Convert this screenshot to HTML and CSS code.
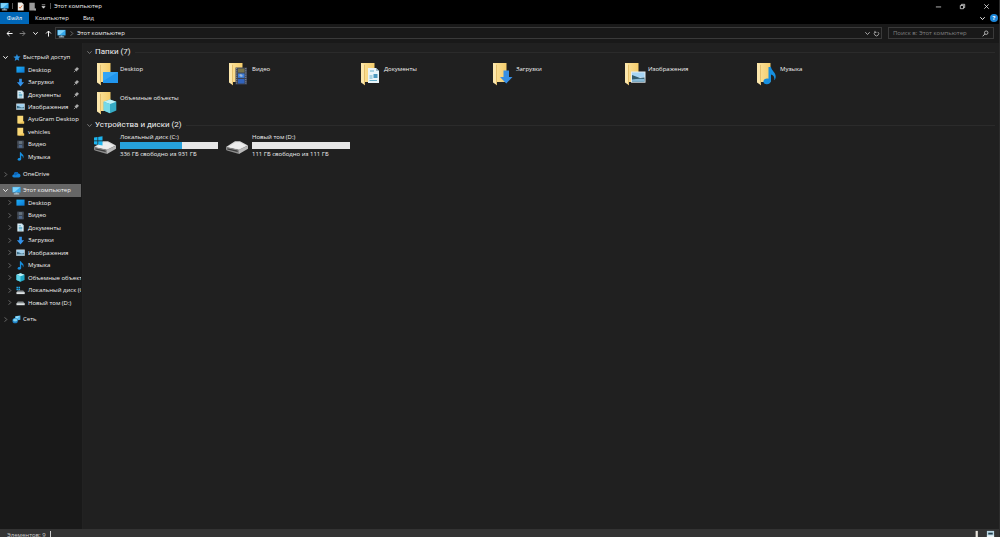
FILE: index.html
```html
<!DOCTYPE html>
<html lang="ru">
<head>
<meta charset="utf-8">
<title>Этот компьютер</title>
<link rel="stylesheet" href="styles.css">
</head>
<body>
<svg class="defs" aria-hidden="true">
  <defs>
    <linearGradient id="g-blue" x1="0" y1="0" x2="1" y2="1"><stop offset="0" stop-color="#1fb0f7"/><stop offset="1" stop-color="#0a78d4"/></linearGradient>
    <linearGradient id="g-fold" x1="0" y1="0" x2="1" y2="0"><stop offset="0" stop-color="#fbe3a0"/><stop offset="1" stop-color="#f5cd6b"/></linearGradient>
  </defs>
  <symbol id="i-chev" viewBox="0 0 8 8"><path d="M1.500 2.500L4 5.200L6.500 2.500" fill="none" stroke="currentColor" stroke-width="1.100"/></symbol>
  <symbol id="i-right" viewBox="0 0 8 8"><path d="M3 1.500L5.500 4L3 6.500" fill="none" stroke="currentColor" stroke-width="1"/></symbol>
  <symbol id="i-pc" viewBox="0 0 10 10"><path d="M.5 1h9v6.200h-9z" fill="#35a9ee"/><path d="M1 1.500h8L3 6.700H1z" fill="#80d3fa"/><path d="M4 7.200h2v1.200H4z" fill="#9fc6dc"/><path d="M2 8.300h6v1H2z" fill="#c3e3f5"/></symbol>
  <symbol id="i-star" viewBox="0 0 10 10"><path d="M5.500 1l1.100 2.700 2.900.300-2.200 1.900.700 2.800-2.500-1.500L3 8.800l.700-2.900-2.200-1.800 2.900-.400z" fill="#2b8fdc"/></symbol>
  <symbol id="i-desk" viewBox="0 0 10 10"><rect x=".5" y="1.800" width="9" height="6.700" fill="url(#g-blue)"/></symbol>
  <symbol id="i-down" viewBox="0 0 10 10"><path d="M3.500.700h3v4h2.500L5 9.500 1 4.700h2.500z" fill="#3292ea"/></symbol>
  <symbol id="i-doc" viewBox="0 0 10 10"><path d="M1.500.500h5l2 2v7h-7z" fill="#dff0f8"/><path d="M6.500.500l2 2h-2z" fill="#8fb6c9"/><path d="M3 3h2.500M3 7.800h4" stroke="#3f9bbd" stroke-width=".8"/><path d="M3 4.200h4v2.500H3z" fill="#70b5cf"/></symbol>
  <symbol id="i-pic" viewBox="0 0 10 10"><path d="M.3 1.700h9.400v7H.3z" fill="#dbe7ee"/><path d="M1 2.400h8v3H1z" fill="#9ed0ef"/><path d="M1 4.200l2.500.8 3 1 2.500-.700V8H1z" fill="#356882"/><path d="M1 7q4-1.500 8-.5V8H1z" fill="#8bb8d0"/></symbol>
  <symbol id="i-fold" viewBox="0 0 10 10"><path d="M1.500.8h6.500v6.500H9v2.200H1.500z" fill="#f8d776"/><path d="M8 7.300H9v2.200H2z" fill="#f0c356"/></symbol>
  <symbol id="i-film" viewBox="0 0 10 10"><rect x="1.500" y=".5" width="7" height="9" fill="#333b47"/><path d="M2.200 1v8M7.800 1v8" stroke="#8f98a3" stroke-width=".7" stroke-dasharray=".8 .6"/><path d="M3.200 1.200h3.600v3.200H3.200z" fill="#66727c"/><path d="M3.200 5.300h3.600v3.400H3.200z" fill="#50698c"/></symbol>
  <symbol id="i-note" viewBox="0 0 10 10"><path d="M4.300.3h1.200c.3 1.800 3.200 2.400 2.900 5.200-.1.800-.5 1.400-.8 1.700.4-1.800-.3-2.700-1.800-3.200v3.500c0 1.500-1 2.200-2.200 2.200-1.200 0-1.900-.5-1.900-1.300 0-1.200 1.400-2 2.600-1.600z" fill="#168fe0"/></symbol>
  <symbol id="i-cube" viewBox="0 0 10 10"><path d="M5 .3l4.500 1.700v5.700L5 9.700.5 7.700V2z" fill="#20a7c6"/><path d="M5 .3l4.500 1.700L5 3.700.5 2z" fill="#b9f1f7"/><path d="M.5 2L5 3.700v6L.5 7.700z" fill="#5fd4e8"/></symbol>
  <symbol id="i-cloud" viewBox="0 0 10 10"><path d="M2.200 8.200C-.2 8.200-.2 5 2 4.900 2.400 2 5.900 1.400 7 4c2.700-.1 3.600 4.200.7 4.200z" fill="#1683d8"/><path d="M2 4.900C2.400 2 5.900 1.400 7 4L4 6z" fill="#0c62b5"/></symbol>
  <symbol id="i-diskc" viewBox="0 0 10 10"><path d="M.5.8h1.800v1.800H.5zM2.700.8h1.800v1.800H2.700zM.5 3h1.800v1.700H.5zM2.700 3h1.800v1.700H2.700z" fill="#21a8e8"/><path d="M2 5h6l1.700 2H.5z" fill="#858b8e"/><path d="M.5 6.800h9.200V9H.5z" fill="#dfe4e6"/></symbol>
  <symbol id="i-disk" viewBox="0 0 10 10"><path d="M2 4h6l1.700 2H.5z" fill="#858b8e"/><path d="M.5 5.800h9.200V8H.5z" fill="#dfe4e6"/></symbol>
  <symbol id="i-net" viewBox="0 0 10 10"><path d="M3.500 1.500L9.300.5v4.800l-5.800 1z" fill="#58b9ec"/><path d="M4.200 2L8.500 1.200 4.200 5.600z" fill="#9be0fa"/><circle cx="3.500" cy="6.300" r="3" fill="#1e82c8"/><path d="M1 5.500Q4 2.500 5.500 5T2 7z" fill="#7fd3ee"/></symbol>
  <symbol id="i-pin" viewBox="0 0 8 8"><path d="M4.500 1l2.500 2.500-.7.300-1.500 1.400-.2 1.300L1.500 3.400l1.300-.2L4.200 1.700z" fill="currentColor"/><path d="M3.200 4.800L1 7" stroke="currentColor" stroke-width=".9"/></symbol>
  <symbol id="b-fold" viewBox="0 0 22 24"><path d="M1 1h13.500v19H1z" fill="url(#g-fold)"/><path d="M1 1l4 2v20.300L1 20.600z" fill="#fce7ac"/><path d="M5 3v20.300l-.9-.5V2.500z" fill="#e2bb65"/></symbol>
  <symbol id="b-drive" viewBox="0 0 22 14"><path d="M0 7L9 1.300h5L22 5.500 13 10z" fill="#d8d8d8"/><path d="M2 7l8-4.700h3.500L20 5.700l-7.200 3.500z" fill="#ededed"/><path d="M0 7l13 2.700V14L1 10.500Q0 10 0 9z" fill="#8c8c8c"/><path d="M1.300 8.300l10.400 2.300v1.500L1.300 9.500z" fill="#3c3c3c"/><path d="M13 9.700l9-4.200v3.300L13 14z" fill="#b8b8b8"/></symbol>
</svg>

<div class="window">
  <header class="titlebar">
    <svg class="ico"><use href="#i-pc"/></svg>
    <i class="sep"></i>
    <button class="bare" aria-label="Свойства"><svg class="ico" viewBox="0 0 10 10"><path d="M2 .5h4.500l2 2v7H2z" fill="#f2f0ea"/><path d="M3.300 5.500l1.200 1.500 2.500-3.200" fill="none" stroke="#e2703a"/></svg></button>
    <button class="bare" aria-label="Новая папка"><svg class="ico" viewBox="0 0 10 10"><path d="M1.500.8h6v6.400h1v2.300h-7z" fill="#999"/><path d="M7.500 7.200h1v2.300h-1z" fill="#bbb"/></svg></button>
    <button class="bare" aria-label="Настройка"><svg class="mini" viewBox="0 0 8 8"><path d="M2 2h4M2.200 4h3.600L4 6z" fill="#ddd" stroke="#ddd" stroke-width=".7"/></svg></button>
    <i class="sep"></i>
    <h1>Этот компьютер</h1>
    <div class="winbtns">
      <button class="bare" aria-label="Свернуть"><svg class="mini" viewBox="0 0 8 8"><path d="M1 4.500h6" stroke="#ddd" stroke-width=".9"/></svg></button>
      <button class="bare" aria-label="Восстановить"><svg class="mini" viewBox="0 0 8 8"><path d="M1.500 2.800h3.700v3.700H1.500zM2.800 2.800V1.500h3.700v3.700H5.200" fill="none" stroke="#ddd" stroke-width=".9"/></svg></button>
      <button class="bare" aria-label="Закрыть"><svg class="mini" viewBox="0 0 8 8"><path d="M1.500 1.500l5 5M6.500 1.500l-5 5" stroke="#eee" stroke-width=".9"/></svg></button>
    </div>
  </header>

  <nav class="ribbon">
    <button class="tab file">Файл</button>
    <button class="tab computer">Компьютер</button>
    <button class="tab view">Вид</button>
    <div class="ribbon-end">
      <button class="bare" aria-label="Развернуть ленту"><svg class="mini"><use href="#i-chev"/></svg></button>
      <button class="help" aria-label="Справка">?</button>
    </div>
  </nav>

  <div class="addressbar">
    <div class="navbtns">
      <button class="bare" aria-label="Назад"><svg class="mini" viewBox="0 0 8 8"><path d="M7.500 4H1.200M4 1.200L1.200 4 4 6.800" fill="none" stroke="#fff" stroke-width="1.100"/></svg></button>
      <button class="bare" aria-label="Вперед"><svg class="mini" viewBox="0 0 8 8"><path d="M.7 4h6M4 1.200L6.800 4 4 6.800" fill="none" stroke="#999" stroke-width=".9"/></svg></button>
      <button class="bare" aria-label="Последние"><svg class="mini"><use href="#i-chev"/></svg></button>
      <button class="bare" aria-label="Вверх"><svg class="mini" viewBox="0 0 8 8"><path d="M4 7.500V1.200M1.200 4L4 1.200 6.800 4" fill="none" stroke="#fff" stroke-width="1.100"/></svg></button>
    </div>
    <div class="path">
      <svg class="ico"><use href="#i-pc"/></svg>
      <svg class="mini dim"><use href="#i-right"/></svg>
      <span class="crumb">Этот компьютер</span>
      <button class="bare soft" aria-label="Адреса"><svg class="mini"><use href="#i-chev"/></svg></button>
      <button class="bare" aria-label="Обновить"><svg class="mini" viewBox="0 0 8 8"><path d="M5.500 2.200A2.500 2.500 0 1 1 2.500 2.200M2.200 1v1.700H4" fill="none" stroke="#bbb" stroke-width=".9"/></svg></button>
    </div>
    <div class="search">
      <input type="search" aria-label="Поиск" placeholder="Поиск в: Этот компьютер">
      <button class="bare" aria-label="Найти"><svg class="mini" viewBox="0 0 8 8"><circle cx="4.800" cy="3.100" r="2" fill="none" stroke="#ccc" stroke-width=".9"/><path d="M3.300 4.500L.8 7.200" stroke="#ccc"/></svg></button>
    </div>
  </div>

  <div class="body">
    <nav class="sidebar">
      <ul class="tree quick">
        <li class="root"><button class="bare" aria-label="Свернуть"><svg class="mini"><use href="#i-chev"/></svg></button><a href="#"><svg class="ico"><use href="#i-star"/></svg>Быстрый доступ</a></li>
        <li><a href="#"><svg class="ico"><use href="#i-desk"/></svg>Desktop</a><svg class="mini pin"><use href="#i-pin"/></svg></li>
        <li><a href="#"><svg class="ico"><use href="#i-down"/></svg>Загрузки</a><svg class="mini pin"><use href="#i-pin"/></svg></li>
        <li><a href="#"><svg class="ico"><use href="#i-doc"/></svg>Документы</a><svg class="mini pin"><use href="#i-pin"/></svg></li>
        <li><a href="#"><svg class="ico"><use href="#i-pic"/></svg>Изображения</a><svg class="mini pin"><use href="#i-pin"/></svg></li>
        <li><a href="#"><svg class="ico"><use href="#i-fold"/></svg>AyuGram Desktop</a></li>
        <li><a href="#"><svg class="ico"><use href="#i-fold"/></svg>vehicles</a></li>
        <li><a href="#"><svg class="ico"><use href="#i-film"/></svg>Видео</a></li>
        <li><a href="#"><svg class="ico"><use href="#i-note"/></svg>Музыка</a></li>
      </ul>
      <ul class="tree">
        <li class="root"><button class="bare dim" aria-label="Развернуть"><svg class="mini"><use href="#i-right"/></svg></button><a href="#"><svg class="ico"><use href="#i-cloud"/></svg>OneDrive</a></li>
      </ul>
      <ul class="tree computer-tree">
        <li class="root selected"><button class="bare" aria-label="Свернуть"><svg class="mini"><use href="#i-chev"/></svg></button><a href="#"><svg class="ico"><use href="#i-pc"/></svg>Этот компьютер</a></li>
        <li><button class="bare dim" aria-label="Развернуть"><svg class="mini"><use href="#i-right"/></svg></button><a href="#"><svg class="ico"><use href="#i-desk"/></svg>Desktop</a></li>
        <li><button class="bare dim" aria-label="Развернуть"><svg class="mini"><use href="#i-right"/></svg></button><a href="#"><svg class="ico"><use href="#i-film"/></svg>Видео</a></li>
        <li><button class="bare dim" aria-label="Развернуть"><svg class="mini"><use href="#i-right"/></svg></button><a href="#"><svg class="ico"><use href="#i-doc"/></svg>Документы</a></li>
        <li><button class="bare dim" aria-label="Развернуть"><svg class="mini"><use href="#i-right"/></svg></button><a href="#"><svg class="ico"><use href="#i-down"/></svg>Загрузки</a></li>
        <li><button class="bare dim" aria-label="Развернуть"><svg class="mini"><use href="#i-right"/></svg></button><a href="#"><svg class="ico"><use href="#i-pic"/></svg>Изображения</a></li>
        <li><button class="bare dim" aria-label="Развернуть"><svg class="mini"><use href="#i-right"/></svg></button><a href="#"><svg class="ico"><use href="#i-note"/></svg>Музыка</a></li>
        <li><button class="bare dim" aria-label="Развернуть"><svg class="mini"><use href="#i-right"/></svg></button><a href="#"><svg class="ico"><use href="#i-cube"/></svg>Объемные объекты</a></li>
        <li><button class="bare dim" aria-label="Развернуть"><svg class="mini"><use href="#i-right"/></svg></button><a href="#"><svg class="ico"><use href="#i-diskc"/></svg>Локальный диск (C:)</a></li>
        <li><button class="bare dim" aria-label="Развернуть"><svg class="mini"><use href="#i-right"/></svg></button><a href="#"><svg class="ico"><use href="#i-disk"/></svg>Новый том (D:)</a></li>
      </ul>
      <ul class="tree">
        <li class="root"><button class="bare dim" aria-label="Развернуть"><svg class="mini"><use href="#i-right"/></svg></button><a href="#"><svg class="ico"><use href="#i-net"/></svg>Сеть</a></li>
      </ul>
    </nav>

    <main class="content">
      <section>
        <h2><svg class="mini"><use href="#i-chev"/></svg>Папки (7)</h2>
        <div class="grid">
          <a class="folder" href="#"><svg class="big" viewBox="0 0 22 24"><use href="#b-fold"/><path d="M7 10h15v11H7z" fill="#2196ee"/><path d="M7 10h15L7 19z" fill="#35a5f4"/></svg>Desktop</a>
          <a class="folder" href="#"><svg class="big" viewBox="0 0 22 24"><use href="#b-fold"/><path d="M7.500 5.500h11.500v17H7.500z" fill="#3b4254"/><path d="M8.700 6v16M17.800 6v16" stroke="#8d93a0" stroke-dasharray="1.200 1"/><path d="M10 6.500h6.500v4H10z" fill="#77734a"/><path d="M10 11.500h6.500v4.300H10z" fill="#3f80dc"/><path d="M10 17h6.500v4.500H10z" fill="#3163bd"/><path d="M11 13l2-1 2 2-2 1z" fill="#9fb6d2"/></svg>Видео</a>
          <a class="folder" href="#"><svg class="big" viewBox="0 0 22 24"><use href="#b-fold"/><path d="M8 6h8l3 3v12H8z" fill="#e9f4f9"/><path d="M16 6l3 3h-3z" fill="#9cbac8"/><path d="M10 9h4M9.500 14h3M9.500 16h3M9.500 18.500h7.500" stroke="#64aeca"/><path d="M13.500 12h4v4h-4z" fill="#4d99bf"/></svg>Документы</a>
          <a class="folder" href="#"><svg class="big" viewBox="0 0 22 24"><use href="#b-fold"/><path d="M11.500 8.500h5.500v6.500h3.500l-6.200 6.500-6.300-6.500h3.500z" fill="#368fe5"/></svg>Загрузки</a>
          <a class="folder" href="#"><svg class="big" viewBox="0 0 22 24"><use href="#b-fold"/><path d="M7 9.500h14.500v11.200H7z" fill="#e4edf2"/><path d="M8 10.500h12.500v5H8z" fill="#a6d5f5"/><path d="M8 13l4 1.500 4 1.500 4.500-.5v4.200H8z" fill="#315c6f"/><path d="M8 17.500q6-1 12.500-.5v2.700H8z" fill="#86b8d5"/></svg>Изображения</a>
          <a class="folder" href="#"><svg class="big" viewBox="0 0 22 24"><use href="#b-fold"/><path d="M12.500 5H15c.4 4 5 5 4.700 10-.1 1.400-.8 2.600-1.400 3.200.5-3-.6-5-3.300-5.800v5.800c0 2.900-1.900 4-4.200 4s-3.400-1-3.400-2.700c0-2.200 2.700-3.500 5.100-2.800z" fill="#168fe0"/></svg>Музыка</a>
          <a class="folder" href="#"><svg class="big" viewBox="0 0 22 24"><use href="#b-fold"/><path d="M14 8.500l6.300 2.200v8.800L14 22.300l-6.300-2.800v-8.800z" fill="#36abc5"/><path d="M14 8.500l6.300 2.200L14 13l-6.300-2.300z" fill="#c4f3f7"/><path d="M7.700 10.700L14 13v9.300l-6.300-2.800z" fill="#76d9e8"/></svg>Объемные объекты</a>
        </div>
      </section>
      <section>
        <h2><svg class="mini"><use href="#i-chev"/></svg>Устройства и диски (2)</h2>
        <div class="grid drives">
          <a class="drive" href="#"><svg class="big-drive" viewBox="0 0 22 20"><use href="#b-drive" y="5" width="22" height="14"/><path d="M0 2.500l3.500-.5v3.500H0zM4.200 1.900L8.500 1.300v4.200H4.200zM0 6.200h3.500v3.500L0 9.200zM4.200 6.200h4.300v4.200l-4.300-.6z" fill="#1cb5ef"/></svg>
            <span class="info"><span>Локальный диск (C:)</span><span class="bar"><span class="used" style="width:63%"></span></span><span class="free">336 ГБ свободно из 931 ГБ</span></span></a>
          <a class="drive" href="#"><svg class="big-drive" viewBox="0 0 22 20"><use href="#b-drive" y="5" width="22" height="14"/></svg>
            <span class="info"><span>Новый том (D:)</span><span class="bar"></span><span class="free">111 ГБ свободно из 111 ГБ</span></span></a>
        </div>
      </section>
    </main>
  </div>

  <footer class="status">
    <span class="count">Элементов: 9</span>
    <div class="views">
      <button class="bare" aria-label="Таблица"><svg class="ico" viewBox="0 0 10 10"><path d="M4 1h2.500v9H4z" fill="#e8e4dc"/></svg></button>
      <button class="bare" aria-label="Плитка"><svg class="ico" viewBox="0 0 10 10"><path d="M1 1h8v8H1z" fill="#b9d6e3"/><path d="M2.500 3h5v2h-5z" fill="#24404e"/><path d="M1 6h8v3H1z" fill="#e9f2f5"/></svg></button>
    </div>
  </footer>
</div>
</body>
</html>
```

FILE: styles.css
```css
* { box-sizing: border-box; }
body {
  margin: 0;
  background: #000;
  color: #f2f2f2;
  font: 6px/8px "Open Sans", "Noto Sans", sans-serif;
}
h1, h2, ul { margin: 0; padding: 0; font-weight: 400; list-style: none; }
a { color: inherit; text-decoration: none; }
button, input { font: inherit; color: inherit; }
svg { display: block; flex: none; }
.defs { position: absolute; width: 0; height: 0; }
.ico { width: 9px; height: 9px; }
.mini { width: 7px; height: 7px; }
.bare { border: 0; padding: 0; background: none; display: flex; align-items: center; justify-content: center; }
.dim { color: #777; }
.soft { color: #aaa; }

.window {
  height: 100vh;
  display: flex;
  flex-direction: column;
  overflow: hidden;
  border-right: 1px solid #2c2c2c;
}

.titlebar { flex: none; height: 12px; display: flex; align-items: center; gap: 3px; }
.titlebar h1 { font-size: 6px; }
.sep { width: 1px; height: 6px; background: #555; }
.winbtns { margin-left: auto; padding-right: 9px; display: flex; gap: 17px; }

.ribbon { flex: none; height: 12px; display: flex; }
.tab { border: 0; padding: 0; background: none; }
.file { width: 29px; background: #0067b8; color: #fff; }
.computer { width: 46px; }
.view { width: 27px; }
.ribbon-end { margin-left: auto; padding-right: 1px; display: flex; align-items: center; gap: 4px; }
.help { width: 8px; height: 8px; padding: 0; border: 0; border-radius: 50%; background: #1d86d8; color: #fff; font-weight: 700; line-height: 8px; }

.addressbar {
  flex: none;
  height: 19px;
  padding: 3px 5px 4px 6px;
  background: #191919;
  display: flex;
  gap: 6px;
}
.navbtns { width: 49px; padding-right: 3px; margin-right: -6px; display: flex; align-items: center; justify-content: space-between; }
.path { flex: 1; display: flex; align-items: center; gap: 2px; padding: 0 1px; border: 1px solid #3a3a3a; }
.crumb { flex: 1; }
.search { width: 106px; display: flex; align-items: center; padding: 0 4px; border: 1px solid #3a3a3a; }
.search input { flex: 1; min-width: 0; padding: 0; border: 0; outline: 0; background: none; }
.search input::placeholder { color: #808080; opacity: 1; }

.body { flex: 1; min-height: 0; display: flex; }
.sidebar { width: 83px; flex: none; padding: 8px 1px 0 0; background: #191919; border-right: 1px solid #222; overflow: hidden; }
.tree { display: grid; grid-auto-rows: 12px; margin-bottom: 4px; }
.quick { height: 112px; grid-auto-rows: 1fr; margin-bottom: 5px; }
.computer-tree { height: 125px; grid-auto-rows: 1fr; }
.tree li { display: flex; align-items: center; padding-left: 6px; min-width: 0; overflow: hidden; }
.tree li.root { padding-left: 2px; }
.tree a { display: flex; align-items: center; gap: 3px; white-space: nowrap; margin-left: 3px; }
.tree .root a { gap: 2px; }
.quick li:not(.root) a { margin-left: 10px; }
.pin { margin-left: auto; margin-right: 1px; color: #aaa; }
.tree .selected { background: #666; }

.content { flex: 1; padding: 4px 4px 0 3px; background: #202020; }
h2 { display: flex; align-items: center; gap: 2px; height: 10px; font-family: Roboto, "Noto Sans", sans-serif; font-size: 8px; }
h2 .mini { color: #777; }
h2::after { content: ""; flex: 1; height: 1px; margin-left: 2px; background: #2b2b2b; }
.grid { display: grid; grid-template-columns: repeat(auto-fill, 132px); grid-auto-rows: 29px; padding: 5px 0 0 10px; }
.folder { display: flex; gap: 2px; line-height: 14px; }
.big { width: 22px; height: 24px; }
.drives { padding: 3px 0 0 8px; }
.drive { display: flex; gap: 4px; }
.big-drive { width: 22px; height: 20px; margin-top: 2px; }
.info { width: 98px; display: flex; flex-direction: column; }
.bar { height: 7px; background: #e6e6e6; margin: 1px 0; }
.used { display: block; height: 100%; background: #26a0da; }

.status { flex: none; height: 8px; padding: 2px 4px 0 7px; background: #333; display: flex; overflow: hidden; }
.count { padding-right: 4px; border-right: 1px solid #ccc; color: #ccc; }
.views { margin-left: auto; display: flex; gap: 5px; }
```
